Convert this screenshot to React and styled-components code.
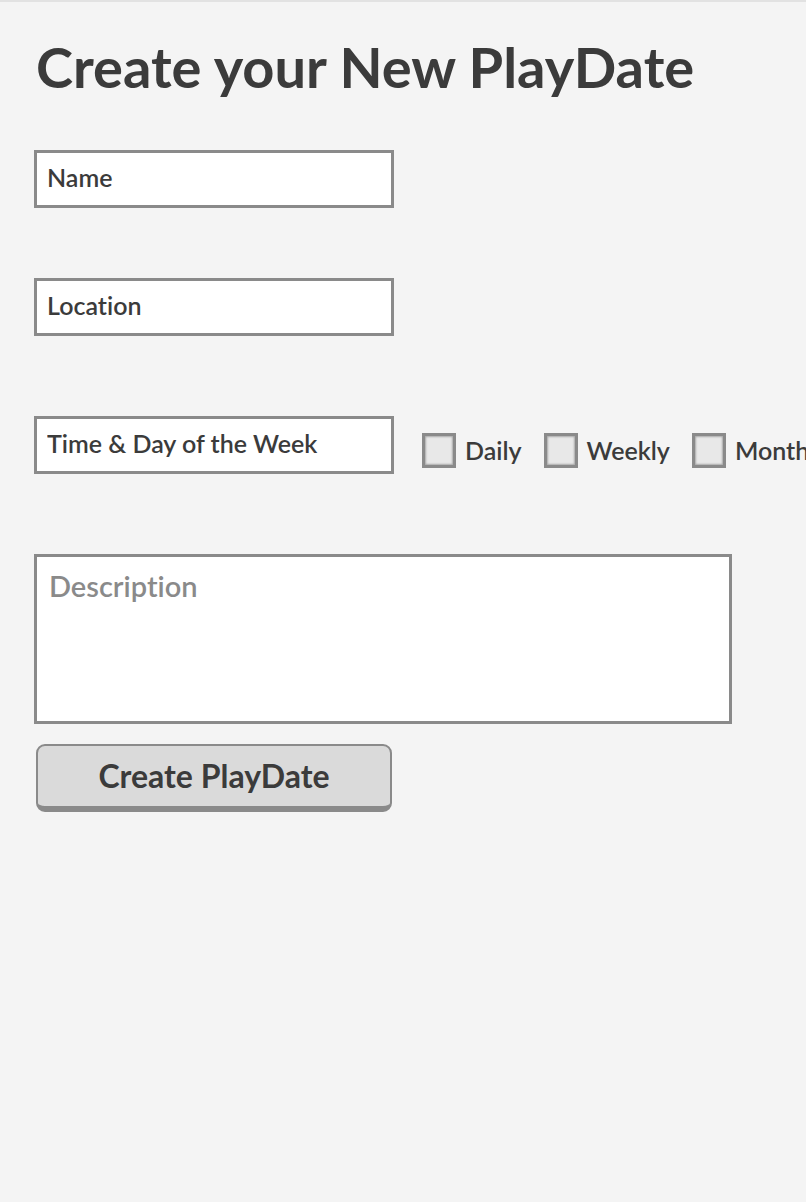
import React from "react";
import styled, { createGlobalStyle } from "styled-components";

const Global = createGlobalStyle`
  html, body { margin: 0; padding: 0; background: #f4f4f4; }
  body { font-family: Lato, "Open Sans", sans-serif; color: #3b3b3b; font-variant-ligatures: none; }
  * { box-sizing: border-box; }
`;

const Page = styled.div`
  min-height: 1202px;
  background: #f4f4f4;
  border-top: 2px solid #e2e2e2;
  padding: 0 0 0 34px;
  overflow: hidden;
`;

const Title = styled.h1`
  margin: 33px 0 0 2px;
  font-size: 56px;
  line-height: 64px;
  font-weight: 700;
  color: #3b3b3b;
  white-space: nowrap;
`;

const Form = styled.form`
  display: flex;
  flex-direction: column;
  align-items: flex-start;
  margin-top: ${p => p.$top}px;
`;

const Field = styled.input`
  width: 360px;
  height: 58px;
  border: 3px solid #8a8a8a;
  background: #fff;
  padding: 0 10px 5px;
  font-family: Lato, "Open Sans", sans-serif;
  font-variant-ligatures: none;
  font-size: 25px;
  font-weight: 600;
  color: #3b3b3b;
  outline: none;
  margin-top: ${p => p.$gap || 0}px;
  &::placeholder { color: #3b3b3b; opacity: 1; }
`;

const Row = styled.div`
  display: flex;
  align-items: center;
  margin-top: ${p => p.$gap || 0}px;
`;

const Options = styled.div`
  display: flex;
  align-items: center;
  gap: 22px;
  margin-left: 28px;
  margin-top: 10px;
  white-space: nowrap;
`;

const Option = styled.label`
  display: flex;
  align-items: center;
  gap: 9px;
  font-size: 25px;
  font-weight: 600;
  color: #3b3b3b;
`;

const Box = styled.span`
  display: inline-block;
  width: 34px;
  height: 35px;
  background: #e8e8e8;
  border: 3px solid #8a8a8a;
  box-shadow: inset 0 0 2px 1px #a8a8a8;
`;

const Area = styled.textarea`
  width: 698px;
  height: 170px;
  margin-top: 80px;
  border: 3px solid #8a8a8a;
  background: #fff;
  padding: 11px 12px;
  font-family: Lato, "Open Sans", sans-serif;
  font-variant-ligatures: none;
  font-size: 29px;
  font-weight: 600;
  resize: none;
  outline: none;
  color: #3b3b3b;
  &::placeholder { color: #8a8a8a; opacity: 1; }
`;

const Button = styled.button`
  margin-top: 20px;
  margin-left: 2px;
  width: 356px;
  height: 68px;
  background: #dadada;
  border: 2px solid #8a8a8a;
  border-bottom-width: 6px;
  border-radius: 9px;
  font-family: Lato, "Open Sans", sans-serif;
  font-size: 32px;
  font-weight: 700;
  color: #3b3b3b;
  padding: 0 0 2px;
  cursor: pointer;
`;

export default function App() {
  return (
    <>
      <Global />
      <Page>
        <Title>Create your New PlayDate</Title>
        <Form $top={51} onSubmit={e => e.preventDefault()}>
          <Field placeholder="Name" />
          <Field placeholder="Location" $gap={70} />
          <Row $gap={80}>
            <Field placeholder="Time & Day of the Week" />
            <Options>
              <Option><Box />Daily</Option>
              <Option><Box />Weekly</Option>
              <Option><Box />Monthly</Option>
            </Options>
          </Row>
          <Area placeholder="Description" />
          <Button type="submit">Create PlayDate</Button>
        </Form>
      </Page>
    </>
  );
}
